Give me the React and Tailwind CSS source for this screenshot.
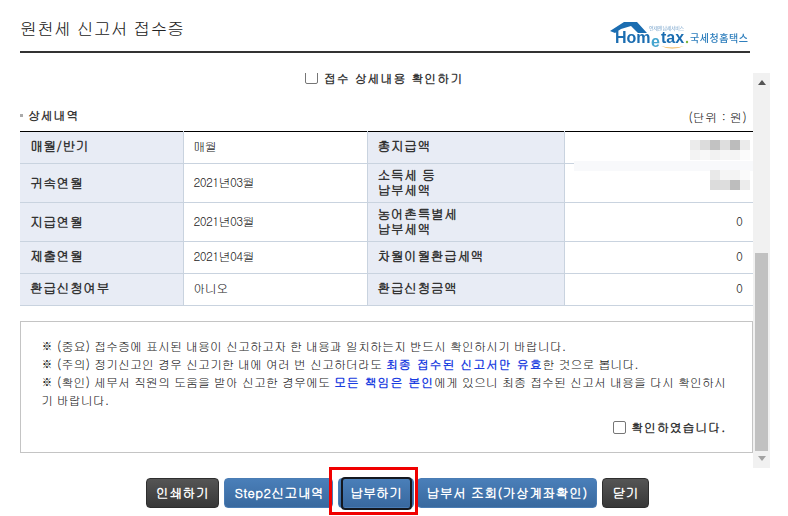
const KO = "font-['Gulim','Noto_Sans_CJK_KR','Noto_Sans',sans-serif]";

function Logo() {
  return (
    <svg width="141" height="30" viewBox="0 0 141 30" className="block blur-[0.35px]" aria-label="Hometax 국세청홈택스">
      <path d="M1 11 L15 2 L28 2 L38 13 L29 13 L22 6 L12 9 L6 13 Z" fill="#1b6db1" />
      <text x="6" y="23" fontFamily="Liberation Sans" fontWeight="700" fontSize="16" fill="#1b6db1">Hom</text>
      <text x="42" y="27" fontFamily="Liberation Sans" fontWeight="700" fontSize="16" fill="#45a5cf">e</text>
      <text x="52" y="23" fontFamily="Liberation Sans" fontWeight="700" fontSize="16" fill="#1b6db1">tax</text>
      <circle cx="78" cy="22" r="1.2" fill="#7bb53a" />
      <path d="M52 26 Q63 31 75 26 Q63 29 52 26 Z" fill="#f2b04c" />
      <text x="40" y="10" fontFamily="Noto Sans CJK KR" fontSize="5" fill="#7aa5cc" textLength="35">언제엔 납세서비스</text>
      <text x="81" y="22" fontFamily="Noto Sans CJK KR" fontWeight="500" fontSize="10" fill="#2f7fbd" textLength="58">국세청홈택스</text>
    </svg>
  );
}

function Mosaic({ cells, className }) {
  // blurred amount: rows of grey squares
  return (
    <div className={"absolute flex flex-col " + className}>
      {cells.map((row, i) => (
        <div key={i} className="flex justify-end">
          {row.map((c, j) => (
            <span key={j} className="w-[10px] h-[10px]" style={{ background: c }} />
          ))}
        </div>
      ))}
    </div>
  );
}

function Th({ children }) {
  return (
    <th className="bg-[#e8ecf5] border-r border-b border-[#c9d3df] pl-[10px] text-left align-middle text-[13px] leading-[15px] font-bold text-[#333] tracking-[0.3px]">
      {children}
    </th>
  );
}

function Td({ children, right }) {
  return (
    <td className={"relative border-b border-[#c9d3df] text-[12px] text-[#222] align-middle " + (right ? "text-right pr-[10px]" : "border-r pl-[10px] tracking-[-0.6px]")}>
      {children}
    </td>
  );
}

function Btn({ children, dark, className = "" }) {
  const color = dark
    ? "bg-gradient-to-b from-[#555] to-[#383838] border-[#2e2e2e]"
    : "bg-gradient-to-b from-[#4a7fb9] to-[#39699f] border-[#4a7cb4]";
  return (
    <button className={"h-[30px] rounded-[4px] border text-white text-[13px] font-bold tracking-[0.3px] " + color + " " + className}>
      {children}
    </button>
  );
}

export default function App() {
  return (
    <div className={"w-[788px] h-[516px] bg-white overflow-hidden flex flex-col text-[#222] " + KO}>
      <header className="w-[730px] ml-[20px] h-[53px] shrink-0 border-b-[2px] border-[#333] flex items-start justify-between">
        <h1 className="mt-[16px] text-[17px] leading-[24px] font-normal text-[#222]">원천세 신고서 접수증</h1>
        <div className="mt-[20px]"><Logo /></div>
      </header>

      <div className="ml-[20px] mt-[20px] h-[395px] w-[750px] shrink-0 flex overflow-hidden">
        <div className="w-[733px] shrink-0">
          <label className="flex items-center justify-center h-[11px] mt-[-1px] pr-[5px] text-[12px] font-bold text-[#333] tracking-[0.95px]">
            <span className="w-[13px] h-[14px] mt-[-2px] border border-[#767676] rounded-[2px] mr-[6px] bg-white" />
            접수 상세내용 확인하기
          </label>

          <div className="flex items-center justify-between h-[20px] mt-[21px] mb-[7px]">
            <h2 className="flex items-center mt-[2px] text-[12px] font-bold text-[#333] tracking-[0.8px]">
              <span className="w-[3px] h-[3px] bg-[#aaa] mr-[5px]" />
              상세내역
            </h2>
            <span className="text-[12px] mt-[5px] mr-[6px] text-[#222] tracking-[0.2px]">(단위 : 원)</span>
          </div>

          <table className="w-[733px] table-fixed border-collapse border-t border-t-black">
            <colgroup>
              <col className="w-[163px]" />
              <col className="w-[184px]" />
              <col className="w-[197px]" />
              <col className="w-[189px]" />
            </colgroup>
            <tbody>
              <tr className="h-[32px] [&>*]:pb-[4px]">
                <Th>매월/반기</Th>
                <Td>매월</Td>
                <Th>총지급액</Th>
                <Td right>
                  <Mosaic className="right-[3px] top-[8px]" cells={[
                    ["#ebebeb", "#dcdcdc", "#c2c2c2", "#dedede", "#bcbcbc", "#ebebeb"],
                    ["#f3f3f3", "#f8f8f8", "#f2f2f2", "#f6f6f6", "#f4f4f4", "#fbfbfb"],
                  ]} />
                </Td>
              </tr>
              <tr className="h-[39px] [&>*]:pb-[2px]">
                <Th>귀속연월</Th>
                <Td>2021년03월</Td>
                <Th>소득세 등<br />납부세액</Th>
                <Td right>
                  <div className="absolute left-[9px] right-0 top-[-3px] h-[10px] bg-[#f8f9fb]" />
                  <Mosaic className="right-[3px] top-[6px]" cells={[
                    ["#e9e9e9", "#f5f5f5", "#f3f3f3", "#fafafa"],
                    ["#dcdcdc", "#dddddd", "#bdbdbd", "#ececec"],
                  ]} />
                </Td>
              </tr>
              <tr className="h-[39px] [&>*]:pb-[2px]">
                <Th>지급연월</Th>
                <Td>2021년03월</Td>
                <Th>농어촌특별세<br />납부세액</Th>
                <Td right>0</Td>
              </tr>
              <tr className="h-[32px] [&>*]:pb-[4px]">
                <Th>제출연월</Th>
                <Td>2021년04월</Td>
                <Th>차월이월환급세액</Th>
                <Td right>0</Td>
              </tr>
              <tr className="h-[32px] [&>*]:pb-[4px]">
                <Th>환급신청여부</Th>
                <Td>아니오</Td>
                <Th>환급신청금액</Th>
                <Td right>0</Td>
              </tr>
            </tbody>
          </table>

          <div className="mt-[15px] h-[132px] border border-[#c4c4c4] pt-[15px] pl-[20px] pr-[20px] text-[12px] leading-[18px] text-[#222]">
            <p>※ (중요) 접수증에 표시된 내용이 신고하고자 한 내용과 일치하는지 반드시 확인하시기 바랍니다.</p>
            <p>※ (주의) 정기신고인 경우 신고기한 내에 여러 번 신고하더라도 <b className="text-[#1a3de0] tracking-[0.9px]">최종 접수된 신고서만 유효</b>한 것으로 봅니다.</p>
            <p>※ (확인) 세무서 직원의 도움을 받아 신고한 경우에도 <b className="text-[#1a3de0] tracking-[0.9px]">모든 책임은 본인</b>에게 있으니 최종 접수된 신고서 내용을 다시 확인하시<br />기 바랍니다.</p>
            <label className="mt-[9px] flex items-center justify-end pr-[6px] font-bold text-[#333] tracking-[0.85px]">
              <span className="w-[13px] h-[13px] border border-[#767676] rounded-[2px] mr-[5px] bg-white" />
              확인하였습니다.
            </label>
          </div>
        </div>

        <div className="w-[17px] h-[395px] bg-[#f1f1f1] flex flex-col items-center">
          <svg width="8" height="5" viewBox="0 0 8 5" className="mt-[7px] shrink-0"><path d="M0 5 L4 0 L8 5 Z" fill="#555" /></svg>
          <div className="mt-auto w-[13px] h-[198px] bg-[#c1c1c1]" />
          <svg width="8" height="5" viewBox="0 0 8 5" className="mt-[5px] mb-[7px] shrink-0"><path d="M0 0 L4 5 L8 0 Z" fill="#a3a3a3" /></svg>
        </div>
      </div>

      <div className="flex items-start pl-[146px] pt-[10px] gap-[5px]">
        <Btn dark className="w-[73px]">인쇄하기</Btn>
        <Btn className="w-[109px] pl-[2px]">Step2신고내역</Btn>
        <div className="relative mr-[-2px]">
          <Btn className="w-[76px] block !tracking-[0px]">납부하기</Btn>
          <div className="absolute left-[3px] right-[2px] top-[-1px] bottom-[-2px] border-2 border-[#14181f] rounded-[4px] pointer-events-none" />
          <div className="absolute left-[-9px] top-[-11px] w-[89px] h-[48px] border-[3px] border-[#f00000] pointer-events-none" />
        </div>
        <Btn className="w-[180px]">납부서 조회(가상계좌확인)</Btn>
        <Btn dark className="w-[47px]">닫기</Btn>
      </div>
    </div>
  );
}
